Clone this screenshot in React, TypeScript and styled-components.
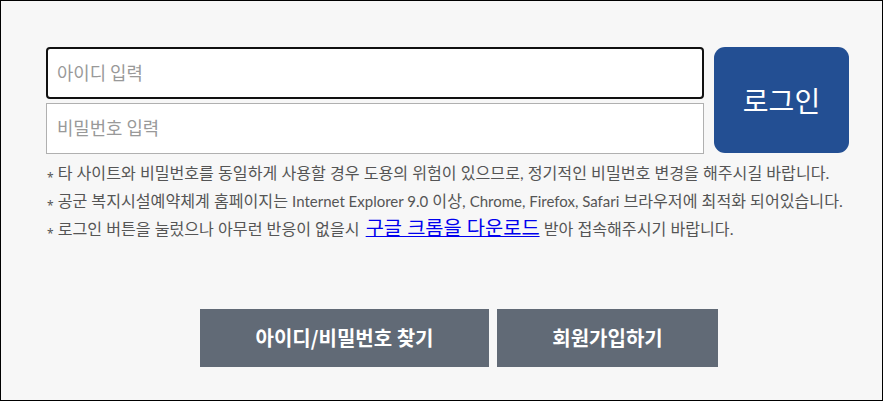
import styled, { createGlobalStyle } from "styled-components";

const GlobalStyle = createGlobalStyle`
  html, body { margin: 0; padding: 0; background: #fff; }
  * { box-sizing: border-box; }
`;

const FONT = `"Noto Sans CJK KR", "Noto Sans", sans-serif`;
const NOTE_FONT = `Lato, "Noto Sans CJK KR", sans-serif`;

const Frame = styled.div`
  width: 883px;
  height: 401px;
  border: 1px solid #000;
  background: #f7f7f7;
  font-family: ${FONT};
  padding: 46px 0 0 45px;
`;

const LoginRow = styled.div`
  display: flex;
  gap: 10px;
`;

const InputCol = styled.div`
  display: flex;
  flex-direction: column;
  gap: 4px;
  width: 658px;
`;

const Field = styled.input<{ $focused?: boolean }>`
  width: 100%;
  height: ${(p) => (p.$focused ? "52px" : "51px")};
  background: #fff;
  border: ${(p) => (p.$focused ? "2px solid #111" : "1px solid #b0b0b0")};
  border-radius: ${(p) => (p.$focused ? "4px" : "0")};
  padding: 0 0 3px ${(p) => (p.$focused ? "9px" : "10px")};
  font-family: ${FONT};
  font-size: 17.8px;
  color: #333;
  outline: none;
  &::placeholder { color: #999; }
`;

const LoginButton = styled.button`
  width: 135px;
  height: 106px;
  border: 0;
  border-radius: 11px;
  background: #234f93;
  color: #fff;
  font-family: ${FONT};
  font-size: 28px;
  cursor: pointer;
`;

const Notes = styled.ul`
  list-style: none;
  margin: 5px 0 0;
  padding: 0 0 0 1px;
`;

const Note = styled.li`
  font-family: ${NOTE_FONT};
  font-size: 16.1px;
  line-height: 27.5px;
  height: 27.5px;
  color: #555;
  white-space: nowrap;
`;

const Star = styled.span`
  font-family: "Noto Sans", sans-serif;
  font-size: 12px;
  margin-right: 4px;
  vertical-align: -3px;
`;

/* latin words run a little smaller than the hangul around them */
const Latin = styled.span`
  font-size: 15px;
`;

const DownloadLink = styled.a`
  color: #0000ee;
  font-size: 19.8px;
  margin-left: 2px;
  text-decoration: underline;
`;

const ButtonRow = styled.div`
  display: flex;
  gap: 8px;
  margin: 67px 0 0 154px;
`;

const GrayButton = styled.button<{ $w: number }>`
  width: ${(p) => p.$w}px;
  height: 58px;
  border: 0;
  background: #616a76;
  color: #fff;
  font-family: ${FONT};
  font-size: 20px;
  font-weight: 700;
  cursor: pointer;
`;

export default function App() {
  return (
    <>
      <GlobalStyle />
      <Frame>
        <LoginRow>
          <InputCol>
            <Field $focused placeholder="아이디 입력" />
            <Field type="password" placeholder="비밀번호 입력" />
          </InputCol>
          <LoginButton>로그인</LoginButton>
        </LoginRow>
        <Notes>
          <Note>
            <Star>*</Star>타 사이트와 비밀번호를 동일하게 사용할 경우 도용의 위험이 있으므로, 정기적인 비밀번호 변경을 해주시길 바랍니다.
          </Note>
          <Note>
            <Star>*</Star>공군 복지시설예약체계 홈페이지는 <Latin>Internet Explorer 9.0</Latin> 이상, <Latin>Chrome, Firefox, Safari</Latin> 브라우저에 최적화 되어있습니다.
          </Note>
          <Note>
            <Star>*</Star>로그인 버튼을 눌렀으나 아무런 반응이 없을시 <DownloadLink href="#">구글 크롬을 다운로드</DownloadLink> 받아 접속해주시기 바랍니다.
          </Note>
        </Notes>
        <ButtonRow>
          <GrayButton $w={289}>아이디/비밀번호 찾기</GrayButton>
          <GrayButton $w={221}>회원가입하기</GrayButton>
        </ButtonRow>
      </Frame>
    </>
  );
}
